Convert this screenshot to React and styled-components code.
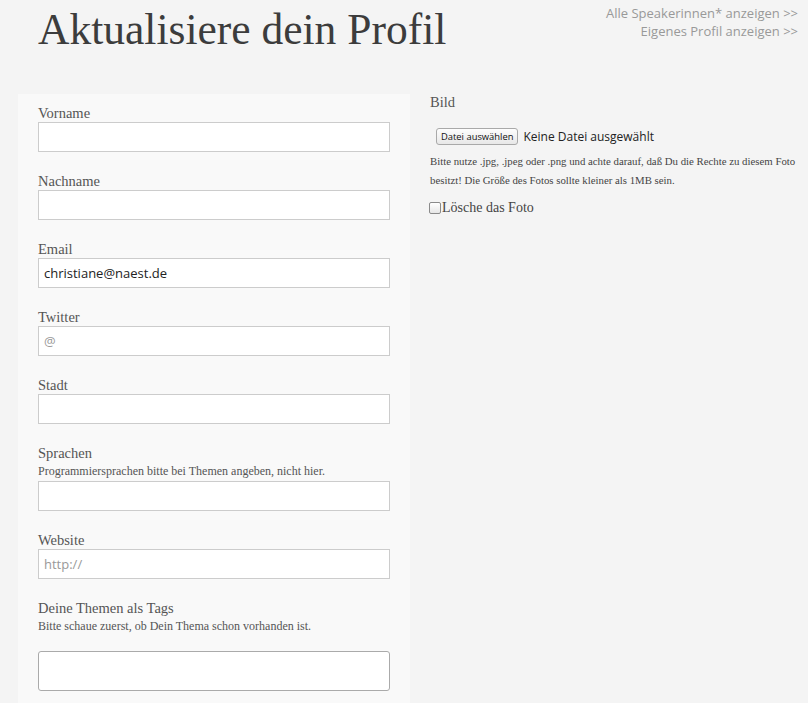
import React from "react";
import styled, { createGlobalStyle } from "styled-components";

const Global = createGlobalStyle`
  html, body { margin: 0; padding: 0; background: #f4f4f4; }
  body { font-family: "Liberation Serif", Georgia, serif; color: #444; }
  * { box-sizing: border-box; }
`;

const Page = styled.div`
  width: 808px;
  min-height: 703px;
  background: #f4f4f4;
`;

const Header = styled.header`
  display: flex;
  justify-content: space-between;
  align-items: flex-start;
  height: 94px;
`;

const Title = styled.h1`
  margin: 4px 0 0 38px;
  font-family: "Liberation Serif", Georgia, serif;
  font-weight: normal;
  font-size: 43.5px;
  line-height: 50px;
  color: #3c3c3c;
`;

const Links = styled.nav`
  display: flex;
  flex-direction: column;
  align-items: flex-end;
  margin: 4px 10px 0 0;
`;

const NavLink = styled.a`
  font-family: "Open Sans", sans-serif;
  font-size: 13px;
  line-height: 18px;
  color: #999;
  text-decoration: none;
`;

const Main = styled.main`
  display: flex;
  align-items: flex-start;
`;

const FormPanel = styled.section`
  margin-left: 18px;
  width: 392px;
  background: #f9f9f9;
  padding: 8px 20px 12px;
`;

const Field = styled.div`
  display: flex;
  flex-direction: column;
  margin-bottom: 18px;
`;

const Label = styled.label`
  font-size: 14.5px;
  line-height: 18px;
  padding-top: 2px;
  color: #555;
`;

const Hint = styled.div`
  font-size: 12px;
  line-height: 19px;
  color: #555;
  margin-bottom: ${(p) => p.$gap || 0}px;
`;

const Input = styled.div`
  height: ${(p) => (p.$tall ? 40 : 30)}px;
  background: #fff;
  border: 1px solid ${(p) => (p.$tall ? "#aaa" : "#ccc")};
  border-radius: ${(p) => (p.$tall ? 3 : 0)}px;
  padding: 0 5px;
  display: flex;
  align-items: center;
  font-family: "Open Sans", sans-serif;
  font-size: 13px;
  color: ${(p) => (p.$placeholder ? "#999" : "#222")};
`;

const Side = styled.section`
  margin-left: 20px;
  flex: 1;
`;

const SideLabel = styled.div`
  font-size: 14.5px;
  line-height: 18px;
  margin-top: -1px;
  color: #555;
`;

const FileRow = styled.div`
  display: flex;
  align-items: center;
  gap: 5px;
  margin: 16px 0 0 6px;
  height: 18px;
`;

const FileButton = styled.span`
  font-family: "Open Sans", sans-serif;
  font-size: 9.4px;
  line-height: 15px;
  color: #111;
  padding: 0 4px;
  border: 1px solid #a9a9a9;
  border-radius: 3px;
  background: linear-gradient(#fdfdfd, #e8e8e8);
`;

const FileText = styled.span`
  font-family: "Open Sans", sans-serif;
  font-size: 12px;
  color: #222;
`;

const Help = styled.p`
  margin: 7px 0 0;
  font-size: 10.8px;
  line-height: 19px;
  color: #444;
  width: 372px;
`;

const CheckRow = styled.div`
  display: flex;
  align-items: center;
  gap: 1px;
  margin-top: 10px;
  font-size: 14px;
  color: #444;
`;

const Box = styled.span`
  width: 12px;
  height: 12px;
  border: 1px solid #8a8a8a;
  border-radius: 2px;
  background: linear-gradient(#fff, #e6e6e6);
  margin-left: -1px;
`;

const fields = [
  { label: "Vorname" },
  { label: "Nachname" },
  { label: "Email", value: "christiane@naest.de" },
  { label: "Twitter", placeholder: "@" },
  { label: "Stadt" },
  { label: "Sprachen", hint: "Programmiersprachen bitte bei Themen angeben, nicht hier." },
  { label: "Website", placeholder: "http://" },
];

export default function App() {
  return (
    <Page>
      <Global />
      <Header>
        <Title>Aktualisiere dein Profil</Title>
        <Links>
          <NavLink href="#">Alle Speakerinnen* anzeigen &gt;&gt;</NavLink>
          <NavLink href="#">Eigenes Profil anzeigen &gt;&gt;</NavLink>
        </Links>
      </Header>
      <Main>
        <FormPanel>
          {fields.map((f) => (
            <Field key={f.label}>
              <Label>{f.label}</Label>
              {f.hint && <Hint>{f.hint}</Hint>}
              <Input $placeholder={!!f.placeholder}>{f.value || f.placeholder || ""}</Input>
            </Field>
          ))}
          <Field>
            <Label>Deine Themen als Tags</Label>
            <Hint $gap={15}>Bitte schaue zuerst, ob Dein Thema schon vorhanden ist.</Hint>
            <Input $tall />
          </Field>
        </FormPanel>
        <Side>
          <SideLabel>Bild</SideLabel>
          <FileRow>
            <FileButton>Datei auswählen</FileButton>
            <FileText>Keine Datei ausgewählt</FileText>
          </FileRow>
          <Help>
            Bitte nutze .jpg, .jpeg oder .png und achte darauf, daß Du die Rechte zu diesem Foto
            besitzt! Die Größe des Fotos sollte kleiner als 1MB sein.
          </Help>
          <CheckRow>
            <Box />
            Lösche das Foto
          </CheckRow>
        </Side>
      </Main>
    </Page>
  );
}
